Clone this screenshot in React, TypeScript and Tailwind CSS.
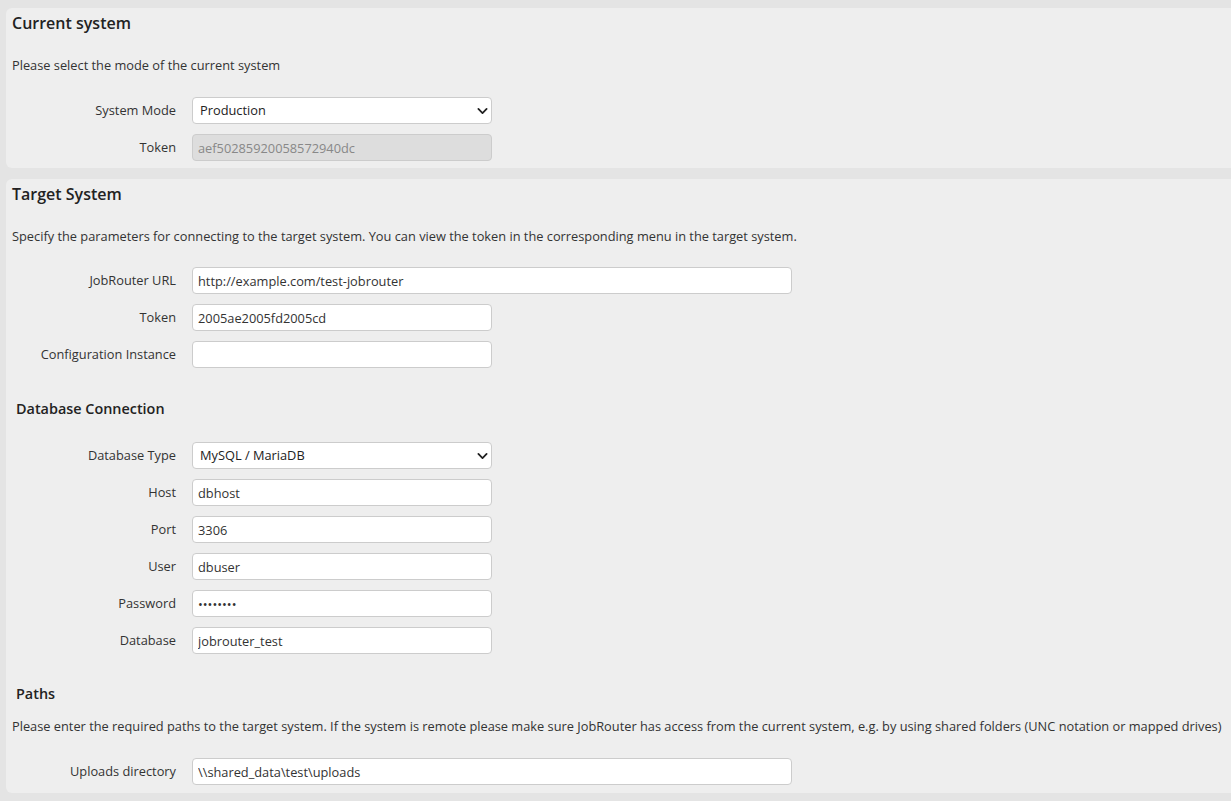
import React from 'react';

const Chevron = () => (
  <svg className="pointer-events-none absolute right-[4px] top-1/2 -translate-y-1/2" width="11" height="11" viewBox="0 0 16 16">
    <path d="M2 5l6 6 6-6" fill="none" stroke="#222" strokeWidth="2.6" strokeLinecap="round" strokeLinejoin="round" />
  </svg>
);

const Row: React.FC<{ label: string; children: React.ReactNode }> = ({ label, children }) => (
  <div className="flex items-center h-[27px]">
    <label className="w-[164px] shrink-0 text-right text-[12.8px] text-[#333]">{label}</label>
    <div className="ml-[16px]">{children}</div>
  </div>
);

const TextInput: React.FC<{ value: string; wide?: boolean; type?: string; disabled?: boolean }> = ({ value, wide, type = 'text', disabled }) => (
  <input
    type={type}
    defaultValue={value}
    disabled={disabled}
    className={`h-[27px] ${wide ? 'w-[600px]' : 'w-[300px]'} rounded-[4px] border border-[#ccc] px-[5px] text-[12.8px] outline-none ${
      disabled ? 'bg-[#dddddd] text-[#888]' : 'bg-white text-[#333]'
    }`}
  />
);

const Select: React.FC<{ value: string }> = ({ value }) => (
  <div className="relative w-[300px]">
    <select
      defaultValue={value}
      className="h-[27px] w-[300px] appearance-none rounded-[4px] border border-[#ccc] bg-white pl-[7px] text-[12.8px] text-[#222] outline-none"
    >
      <option>{value}</option>
    </select>
    <Chevron />
  </div>
);

export default function App() {
  return (
    <div className="min-h-screen bg-[#e4e4e4] pt-[8px] pl-[6px] pb-[8px] text-[#333]" style={{ fontFamily: '"Open Sans", "Noto Sans", sans-serif' }}>
      {/* current system */}
      <div className="rounded-l-[6px] bg-[#eeeeee] px-[6px] pb-[7px]">
        <h2 className="h-[30px] text-[16px] font-semibold leading-[30px] text-[#222]">Current system</h2>
        <p className="mt-[17px] text-[12.8px] leading-[20px]">Please select the mode of the current system</p>
        <div className="mt-[22px] flex flex-col gap-[10px]">
          <Row label="System Mode"><Select value="Production" /></Row>
          <Row label="Token"><TextInput value="aef50285920058572940dc" disabled /></Row>
        </div>
      </div>

      {/* target system */}
      <div className="mt-[11px] rounded-l-[6px] bg-[#eeeeee] px-[6px] pb-[8px]">
        <h2 className="h-[30px] text-[16px] font-semibold leading-[30px] text-[#222]">Target System</h2>
        <p className="mt-[17px] text-[12.8px] leading-[20px]">
          Specify the parameters for connecting to the target system. You can view the token in the corresponding menu in the target system.
        </p>
        <div className="mt-[21px] flex flex-col gap-[10px]">
          <Row label="JobRouter URL"><TextInput value="http://example.com/test-jobrouter" wide /></Row>
          <Row label="Token"><TextInput value="2005ae2005fd2005cd" /></Row>
          <Row label="Configuration Instance"><TextInput value="" /></Row>
        </div>

        <h3 className="mt-[31px] pl-[4px] text-[14.4px] font-semibold leading-[20px] text-[#222]">Database Connection</h3>
        <div className="mt-[23px] flex flex-col gap-[10px]">
          <Row label="Database Type"><Select value="MySQL / MariaDB" /></Row>
          <Row label="Host"><TextInput value="dbhost" /></Row>
          <Row label="Port"><TextInput value="3306" /></Row>
          <Row label="User"><TextInput value="dbuser" /></Row>
          <Row label="Password"><TextInput value="secret12" type="password" /></Row>
          <Row label="Database"><TextInput value="jobrouter_test" /></Row>
        </div>

        <h3 className="mt-[30px] pl-[4px] text-[14.4px] font-semibold leading-[20px] text-[#222]">Paths</h3>
        <p className="mt-[12px] whitespace-nowrap text-[12.8px] leading-[20px]">
          Please enter the required paths to the target system. If the system is remote please make sure JobRouter has access from the current system, e.g. by using shared folders (UNC notation or mapped drives)
        </p>
        <div className="mt-[22px] flex flex-col gap-[10px]">
          <Row label="Uploads directory"><TextInput value={'\\\\shared_data\\test\\uploads'} wide /></Row>
        </div>
      </div>
    </div>
  );
}
